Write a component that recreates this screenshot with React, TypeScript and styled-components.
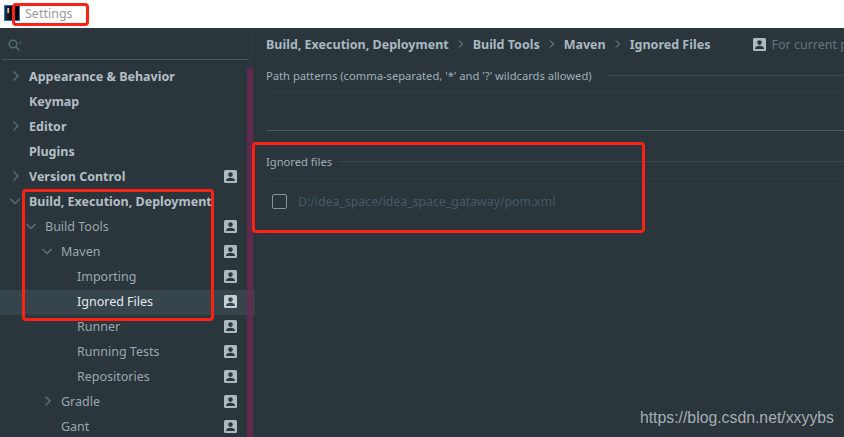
import { Fragment } from "react";
import styled, { createGlobalStyle } from "styled-components";

const GlobalStyle = createGlobalStyle`
  html, body {
    margin: 0;
    padding: 0;
    width: 844px;
    height: 437px;
    overflow: hidden;
    background: #2b353c;
    font-family: "Noto Sans", "Open Sans", sans-serif;
  }
`;

const Page = styled.div`
  position: relative;
  width: 844px;
  height: 437px;
  overflow: hidden;
  display: flex;
  flex-direction: column;
`;

const TitleBar = styled.div`
  height: 28px;
  flex-shrink: 0;
  background: #ffffff;
  display: flex;
  align-items: center;
  gap: 5px;
  padding-left: 4px;
  padding-bottom: 2px;
  box-sizing: border-box;
`;

const AppIcon = styled.div`
  width: 16px;
  height: 16px;
  box-sizing: border-box;
  border: 1px solid #1a6fd0;
  background: linear-gradient(90deg, #2a2a2a, #000 60%);
  color: #fff;
  font: bold 8px/10px "Liberation Sans", sans-serif;
  padding-left: 2px;
`;

const WindowTitle = styled.span`
  font-size: 12.5px;
  color: #9a9a9a;
`;

const Body = styled.div`
  flex: 1;
  display: flex;
  min-height: 0;
`;

const Sidebar = styled.div`
  position: relative;
  width: 255px;
  flex-shrink: 0;
  border-right: 1px solid #29333a;
  overflow: hidden;
`;

const SearchRow = styled.div`
  height: 27px;
  margin: 0 6px 5px 2px;
  padding: 4px 0 0 6px;
  display: flex;
  align-items: center;
  border-bottom: 1px solid #46555f;
`;

const TreeRow = styled.div<{ $selected?: boolean }>`
  height: 25px;
  padding-bottom: 2px;
  box-sizing: border-box;
  display: flex;
  align-items: center;
  position: relative;
  background: ${(p) => (p.$selected ? "#36444c" : "transparent")};
`;

const Arrow = styled.svg`
  position: absolute;
  top: 5px;
`;

const Label = styled.span<{ $bold?: boolean; $selected?: boolean; $indent: number }>`
  margin-left: ${(p) => p.$indent}px;
  font-size: 12.5px;
  font-weight: ${(p) => (p.$bold ? 700 : 400)};
  color: ${(p) => (p.$selected ? "#e3e9ec" : p.$bold ? "#b4bfc5" : "#9aa8b0")};
  white-space: nowrap;
`;

const PersonSlot = styled.span`
  position: absolute;
  left: 224px;
  top: 5px;
  display: flex;
`;

const Scrollbar = styled.div`
  position: absolute;
  left: 247px;
  top: 39px;
  bottom: 0;
  width: 6px;
  border-radius: 3px 3px 0 0;
  background: rgba(116, 38, 80, 0.75);
`;

const Main = styled.div`
  flex: 1;
  padding-left: 10px;
  min-width: 0;
  overflow: hidden;
`;

const Breadcrumbs = styled.div`
  height: 32px;
  display: flex;
  align-items: center;
  gap: 9px;
  white-space: nowrap;
`;

const Crumb = styled.span`
  font-size: 12.5px;
  font-weight: 700;
  color: #a9b9c2;
`;

const Chevron = styled.svg`
  flex-shrink: 0;
`;

const ProjectNote = styled.span`
  display: flex;
  align-items: center;
  gap: 5px;
  margin-left: 34px;
  font-size: 12.5px;
  color: #67747c;
`;

const SectionHead = styled.div<{ $top: number; $gap: number }>`
  display: flex;
  align-items: center;
  gap: ${(p) => p.$gap}px;
  margin-top: ${(p) => p.$top}px;
  height: 20px;
  font-size: 11.2px;
  color: #9fafb8;
  white-space: nowrap;

  &::after {
    content: "";
    flex: 1;
    height: 1px;
    background: #39474f;
  }
`;

const PatternBox = styled.div`
  height: 38px;
  margin-top: 6px;
  border-top: 1px solid #303c44;
  border-left: 1px solid #303c44;
  border-bottom: 1px solid #4a5a63;
`;

const FileBox = styled.div`
  margin-top: 7px;
  height: 240px;
  box-sizing: border-box;
  border-top: 1px solid #303c44;
  border-left: 1px solid #303c44;
  padding: 14px 0 0 5px;
`;

const FileRow = styled.div`
  display: flex;
  align-items: center;
  gap: 11px;
`;

const CheckBox = styled.span`
  width: 15px;
  height: 15px;
  box-sizing: border-box;
  border: 1px solid #87949c;
  border-radius: 2px;
`;

const FileName = styled.span`
  font-size: 12.3px;
  color: #435a67;
`;

const Annotation = styled.div<{ $x: number; $y: number; $w: number; $h: number }>`
  position: absolute;
  left: ${(p) => p.$x}px;
  top: ${(p) => p.$y}px;
  width: ${(p) => p.$w}px;
  height: ${(p) => p.$h}px;
  box-sizing: border-box;
  border: 3px solid #fa2214;
  border-radius: 4px;
  pointer-events: none;
`;

const Watermark = styled.div`
  position: absolute;
  right: 10px;
  bottom: 10px;
  font: 15.8px "Liberation Sans", Arial, sans-serif;
  color: #a6aeb2;
`;

const PersonIcon = ({ color = "#aebac1", cut = "#2b353c" }: { color?: string; cut?: string }) => (
  <svg width="13" height="13" viewBox="0 0 13 13">
    <rect width="13" height="13" rx="1.5" fill={color} />
    <circle cx="6.5" cy="4.6" r="2.3" fill={cut} />
    <path d="M2 11c0-2.2 2.2-3.2 4.5-3.2S11 8.8 11 11z" fill={cut} />
  </svg>
);

const tree = [
  { label: "Appearance & Behavior", indent: 29, bold: true, arrow: "right", arrowX: 12 },
  { label: "Keymap", indent: 29, bold: true },
  { label: "Editor", indent: 29, bold: true, arrow: "right", arrowX: 12 },
  { label: "Plugins", indent: 29, bold: true },
  { label: "Version Control", indent: 29, bold: true, arrow: "right", arrowX: 12, person: true },
  { label: "Build, Execution, Deployment", indent: 29, bold: true, arrow: "down", arrowX: 9 },
  { label: "Build Tools", indent: 45, arrow: "down", arrowX: 25, person: true },
  { label: "Maven", indent: 61, arrow: "down", arrowX: 41, person: true },
  { label: "Importing", indent: 77, person: true },
  { label: "Ignored Files", indent: 77, person: true, selected: true },
  { label: "Runner", indent: 77, person: true },
  { label: "Running Tests", indent: 77, person: true },
  { label: "Repositories", indent: 77, person: true },
  { label: "Gradle", indent: 61, arrow: "right", arrowX: 44, person: true },
  { label: "Gant", indent: 61, person: true },
];

const crumbs = ["Build, Execution, Deployment", "Build Tools", "Maven", "Ignored Files"];

export default function App() {
  return (
    <Page>
      <GlobalStyle />
      <TitleBar>
        <AppIcon>I</AppIcon>
        <WindowTitle>Settings</WindowTitle>
      </TitleBar>
      <Body>
        <Sidebar>
          <SearchRow>
            <svg width="14" height="14" viewBox="0 0 14 14" fill="none" stroke="#54707a" strokeWidth="1.4">
              <circle cx="5" cy="5" r="3.8" />
              <path d="M8 8l3.5 3.5" />
              <path d="M10.5 3.5h3l-1.5 1.8z" fill="#54707a" stroke="none" />
            </svg>
          </SearchRow>
          {tree.map((row) => (
            <TreeRow key={row.label} $selected={row.selected}>
              {row.arrow === "right" && (
                <Arrow width="8" height="12" viewBox="0 0 8 12" fill="none" stroke="#5f6f79" strokeWidth="1.4" style={{ left: row.arrowX }}>
                  <path d="M1.5 1.5L6 6l-4.5 4.5" />
                </Arrow>
              )}
              {row.arrow === "down" && (
                <Arrow width="12" height="12" viewBox="0 0 12 12" fill="none" stroke="#5f6f79" strokeWidth="1.4" style={{ left: row.arrowX }}>
                  <path d="M1.5 4L6 8.5 10.5 4" />
                </Arrow>
              )}
              <Label $indent={row.indent} $bold={row.bold} $selected={row.selected}>
                {row.label}
              </Label>
              {row.person && (
                <PersonSlot>
                  {row.selected ? <PersonIcon color="#c3cfd5" cut="#36444c" /> : <PersonIcon />}
                </PersonSlot>
              )}
            </TreeRow>
          ))}
          <Scrollbar />
        </Sidebar>
        <Main>
          <Breadcrumbs>
            {crumbs.map((c, i) => (
              <Fragment key={c}>
                {i > 0 && (
                  <Chevron width="6" height="10" viewBox="0 0 6 10" fill="none" stroke="#8a98a0" strokeWidth="1">
                    <path d="M1 1.5L4.5 5 1 8.5" />
                  </Chevron>
                )}
                <Crumb>{c}</Crumb>
              </Fragment>
            ))}
            <ProjectNote>
              <PersonIcon />
              For current project
            </ProjectNote>
          </Breadcrumbs>
          <SectionHead $top={5} $gap={15}>Path patterns (comma-separated, '*' and '?' wildcards allowed)</SectionHead>
          <PatternBox />
          <SectionHead $top={20} $gap={7}>Ignored files</SectionHead>
          <FileBox>
            <FileRow>
              <CheckBox />
              <FileName>D:/idea_space/idea_space_gataway/pom.xml</FileName>
            </FileRow>
          </FileBox>
        </Main>
      </Body>
      <Annotation $x={12} $y={3} $w={77} $h={23} />
      <Annotation $x={22} $y={189} $w={192} $h={132} />
      <Annotation $x={252} $y={142} $w={393} $h={91} />
      <Watermark>https://blog.csdn.net/xxyybs</Watermark>
    </Page>
  );
}
